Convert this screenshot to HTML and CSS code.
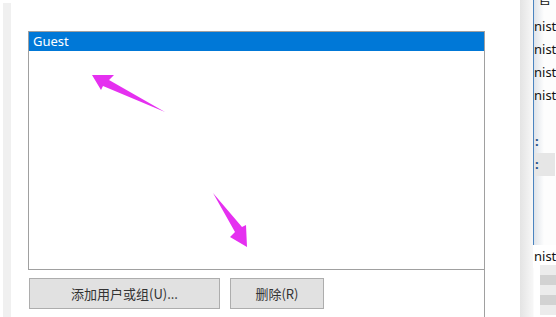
FILE: index.html
```html
<!DOCTYPE html>
<html lang="zh">

<head>
    <meta charset="UTF-8" />
    <title>Guest – 权限</title>
    <link rel="stylesheet" href="styles.css">
</head>

<body>
    <div class="dialog">
        <div class="edge"></div>

        <!-- 用户列表 -->
        <div class="group">
            <div class="frame">
                <ul class="users">
                    <li class="selected">Guest</li>
                </ul>
                <div class="actions">
                    <button class="btn btn-add">添加用户或组(U)...</button>
                    <button class="btn btn-del">删除(R)</button>
                </div>
            </div>
        </div>

        <!-- 右侧被遮挡的窗口 -->
        <div class="side">
            <ul class="side-rows">
                <li class="first">管</li>
                <li>nist</li>
                <li>nist</li>
                <li>nist</li>
                <li>nist</li>
                <li></li>
                <li class="colon">:</li>
                <li class="colon hl">:</li>
                <li></li>
                <li></li>
                <li></li>
                <li class="last">nist</li>
            </ul>
            <div class="mosaic">
                <span></span><span class="dark"></span><span></span><span class="dark"></span><span></span>
            </div>
        </div>
    </div>

    <!-- 箭头 -->
    <svg class="arrows" width="556" height="317" viewBox="0 0 556 317">
        <polygon points="92,75 114,75 109,80 165,112 103,86 101,90" fill="#e530f0" />
        <polygon points="213,193 242,227 246,225 247,247 230,237 235,232" fill="#e530f0" />
    </svg>
</body>

</html>
```

FILE: styles.css
```css
/* تنسيق عام */
body {
    margin: 0;
    background: #fff;
    font-family: "Noto Sans", "Noto Sans CJK SC", sans-serif;
    width: 556px;
    height: 317px;
    overflow: hidden;
    position: relative;
}

.dialog {
    display: flex;
    height: 317px;
}

.edge {
    width: 8px;
    margin: 3px 0 0 3px;
    background: #f0f0f0;
}

/* القائمة */
.group {
    padding: 31px 0 0 17px;
}

.frame {
    width: 456px;
    height: 100%;
    border-right: 1px solid #a0a0a0;
}

.users {
    list-style: none;
    margin: 0;
    padding: 0;
    height: 237px;
    border: 1px solid #a0a0a0;
    border-right: none;
}

.users li {
    height: 19px;
    line-height: 19px;
    padding-left: 4px;
    font-size: 13px;
}

.users .selected {
    background: #0078d7;
    color: #fff;
}

.actions {
    display: flex;
    gap: 10px;
    margin: 8px 0 0 1px;
}

.btn {
    height: 31px;
    background: #e1e1e1;
    border: 1px solid #adadad;
    color: #333;
    font-family: "Noto Sans CJK SC", sans-serif;
    font-size: 13px;
    padding: 0;
}

.btn-add {
    width: 191px;
}

.btn-del {
    width: 94px;
}

/* النافذة الجانبية */
.side {
    margin-left: 35px;
    width: 36px;
    background: linear-gradient(to right, #e4e4e4, #f7f7f7 13px, #fff 14px);
}

.side-rows {
    list-style: none;
    margin: -8px 0 0 13px;
    padding: 0;
    width: 23px;
}

.side-rows li {
    height: 23px;
    line-height: 23px;
    font-size: 13px;
    color: #111;
    white-space: nowrap;
    overflow: hidden;
    border-left: 1px solid #4a84c0;
    background: linear-gradient(to right, #dfe4ea, #fdfdfd 10px);
}

.side-rows .first {
    line-height: 12px;
    padding-left: 4px;
}

.side-rows .colon {
    color: #1d4f86;
    font-weight: bold;
    padding-left: 1px;
}

.side-rows .hl {
    background: #e6e6e6;
    width: 20px;
}

.side-rows .last {
    background: #fff;
    border-left-color: transparent;
}

.mosaic {
    display: flex;
    flex-direction: column;
    margin: -3px 0 0 20px;
}

.mosaic span {
    height: 10px;
    background: #ececec;
}

.mosaic .dark {
    background: #d2d2d2;
}

/* الأسهم */
.arrows {
    position: absolute;
    left: 0;
    top: 0;
    pointer-events: none;
}
```
